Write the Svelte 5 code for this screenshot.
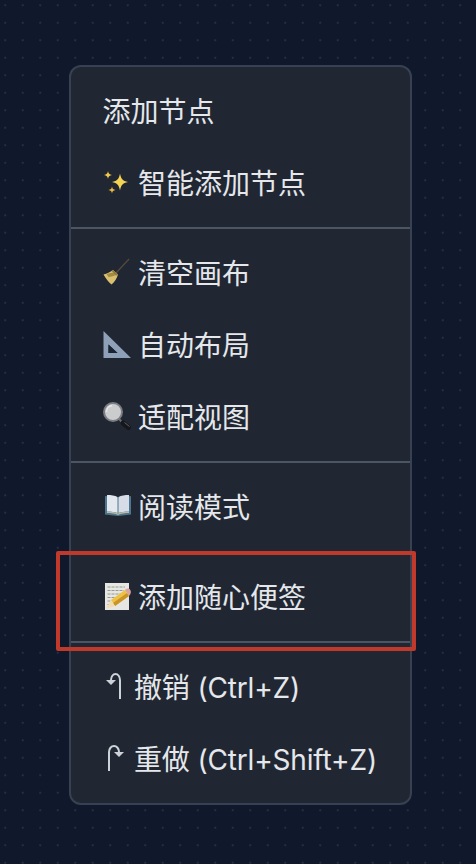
<script lang="ts">
  const groups = [
    [
      { label: '添加节点' },
      { label: '智能添加节点', icon: 'sparkles' },
    ],
    [
      { label: '清空画布', icon: 'broom' },
      { label: '自动布局', icon: 'ruler' },
      { label: '适配视图', icon: 'search' },
    ],
    [{ label: '阅读模式', icon: 'book' }],
    [{ label: '添加随心便签', icon: 'memo' }],
    [
      { label: '撤销 (Ctrl+Z)', arrow: 'undo' },
      { label: '重做 (Ctrl+Shift+Z)', arrow: 'redo' },
    ],
  ];
</script>

{#snippet emoji(name: string)}
  <svg class="emoji" viewBox="0 0 28 28" aria-hidden="true">
    {#if name === 'sparkles'}
      <g transform="translate(0 1)">
        <path fill="#f6d352" d="M17 3.500c.9 5.200 2.600 7.400 8 8.500-5.400 1.100-7.100 3.300-8 8.500-.9-5.200-2.600-7.400-8-8.500 5.400-1.100 7.100-3.300 8-8.500z" />
        <path fill="#f3c94a" d="M5 1c.5 2.600 1.300 3.500 4 4-2.700.5-3.500 1.400-4 4-.5-2.600-1.300-3.500-4-4 2.700-.5 3.500-1.400 4-4z" />
        <path fill="#eab93f" d="M9 16.500c.4 2.300 1.200 3.100 3.500 3.500-2.300.4-3.100 1.200-3.500 3.500-.4-2.300-1.200-3.100-3.500-3.500 2.300-.4 3.100-1.200 3.500-3.500z" />
      </g>
    {:else if name === 'broom'}
      <path stroke="#564a3c" stroke-width="1.200" fill="none" d="M26 0 L13 14" />
      <path fill="#d9c070" d="M10 11 L15 15.500 C14 19 11.500 23 8.500 25.500 C5.500 23 2.500 19 0.500 15.500 C4 14.500 7 13 10 11z" />
      <path fill="#a58a42" d="M3.500 15 C6 14.500 9.500 13.500 12.500 13 L14.500 16 C11 16.500 8 18 5.500 18z" />
      <path fill="#8d7a3e" d="M10 11 L15 15.500 L13.500 16.500 L8.500 12z" />
    {:else if name === 'ruler'}
      <path fill="#8fa1b8" fill-rule="evenodd" d="M0.500 0 L28 27 L0.500 27z M5.500 13.500 L5.500 22 L14.500 22z" />
      <path fill="#1a2433" d="M5.500 13.500 L5.500 22 L14.500 22z" />
    {:else if name === 'search'}
      <path stroke="#6e7176" stroke-width="2" d="M16 16 L20 20" />
      <path stroke="#15171b" stroke-width="5" stroke-linecap="round" d="M20 20 L25.500 24.500" />
      <path stroke="#5c6068" stroke-width="1" d="M21.500 19.500 L26.500 23.500" />
      <circle cx="10" cy="9" r="9" fill="#cbccce" stroke="#7b7d82" stroke-width="2" />
      <path stroke="#e6e7e8" stroke-width="1.500" fill="none" d="M3.500 9 A6.500 6.500 0 0 1 9 2.500" />
    {:else if name === 'book'}
      <path fill="#4d7690" d="M2 3 L15 4.500 L28 3 L28 21.500 L15 23 L2 21.500z" />
      <path fill="#e3e8ef" d="M4 2 C8 2 12 2.500 14.500 4 L14.500 20 C12 19 8 18.500 4 18.500z" />
      <path fill="#d6dde6" d="M26 2 C22 2 18 2.500 15.500 4 L15.500 20 C18 19 22 18.500 26 18.500z" />
      <path fill="#b9b9a4" d="M4 18.500 C8 18.500 12 19 15 20.500 C18 19 22 18.500 26 18.500 L26 20 C22 20 18 20.500 15 22 C12 20.500 8 20 4 20z" />
    {:else if name === 'memo'}
      <path fill="#e6e6e2" d="M2 0 H26 V27 H2z" />
      <path stroke="#85857f" stroke-width=".8" stroke-dasharray="3 1" fill="none" d="M4.500 4 H22 M4.500 7.500 H21 M4.500 11 H18 M4.500 14.500 H13 M4.500 18 H9 M4.500 21.500 H7" />
      <path fill="#efc243" d="M8 17 L22 7 L26 13 L12 23z" />
      <path fill="#c9942a" d="M10 20 L24 10 L26 13 L12 23z" />
      <path fill="#dba39d" d="M22 7 C23.500 5 26 5 27.200 6.800 C28.400 8.600 28 11 26 13z" />
      <path fill="#f3dcb0" d="M8 17 L12 23 L3 25.500z" />
    {/if}
  </svg>
{/snippet}

{#snippet arrow(name: string)}
  <svg class="arrow" viewBox="0 0 31 28" aria-hidden="true">
    {#if name === 'undo'}
      <path fill="none" stroke="currentColor" stroke-width="2" d="M17 26 V7 A4.500 6 0 0 0 8 7 V8" />
      <path fill="currentColor" d="M3 7 H13 L8 12z" />
    {:else}
      <path fill="none" stroke="currentColor" stroke-width="2" d="M6 26 V7 A5 6 0 0 1 16 7 V8" />
      <path fill="currentColor" d="M11 7 H21 L16 12z" />
    {/if}
  </svg>
{/snippet}

<main class="canvas">
  <div class="menu-wrap">
    <nav class="menu">
      {#each groups as items, i}
        {#if i > 0}
          <hr class="divider" />
        {/if}
        {#each items as item}
          <div class="item">
            {#if item.icon}
              {@render emoji(item.icon)}
            {:else if item.arrow}
              {@render arrow(item.arrow)}
            {/if}
            <span class="label" class:latin={item.arrow}>{item.label}</span>
          </div>
        {/each}
      {/each}
    </nav>
    <div class="callout"></div>
  </div>
</main>

<style>
  :global(body) {
    margin: 0;
    background: #10182c;
  }

  .canvas {
    box-sizing: border-box;
    height: 864px;
    padding: 65px 64px 0 69px;
    overflow: hidden;
    background-color: #10182c;
    background-image: radial-gradient(circle, rgba(148, 163, 184, 0.16) 1px, transparent 1.2px);
    background-size: 17.500px 17.500px;
    background-position: -3.500px -3.500px;
  }

  .menu-wrap {
    position: relative;
  }

  .menu {
    box-sizing: border-box;
    width: 343px;
    padding: 8px 0;
    background: #202733;
    border: 2px solid #374151;
    border-radius: 12px;
    color: #e5e7eb;
    font-family: Inter, "Noto Sans CJK SC", sans-serif;
    font-size: 28px;
  }

  .item {
    display: flex;
    align-items: center;
    height: 72px;
    padding-left: 31.500px;
    line-height: 40px;
    white-space: nowrap;
  }

  .label {
    padding-top: 2px;
  }

  .latin {
    letter-spacing: -0.16px;
  }

  .emoji {
    flex: none;
    width: 28px;
    height: 28px;
    margin: 0 7px 0 0.500px;
    overflow: visible;
  }

  .arrow {
    flex: none;
    width: 31px;
    height: 28px;
    margin-left: 0.500px;
    color: #cdd1d8;
  }

  .divider {
    height: 2px;
    margin: 8px 0;
    border: 0;
    background: #4b5563;
  }

  .callout {
    position: absolute;
    left: -13px;
    top: 486px;
    width: 352px;
    height: 92px;
    border: 4px solid #c0392b;
    border-radius: 2px;
  }
</style>
